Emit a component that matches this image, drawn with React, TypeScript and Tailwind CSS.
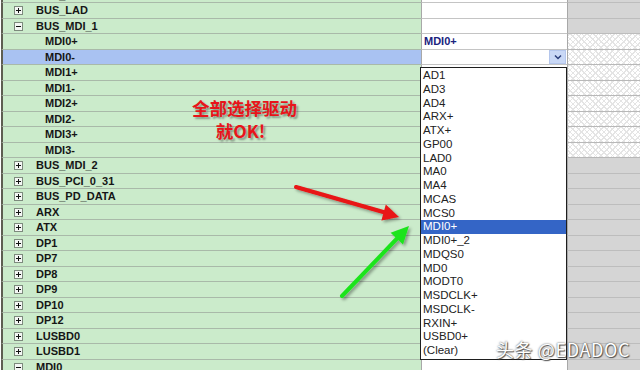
import React from "react";

type Row = {
  label: string;
  level: 0 | 1;
  exp?: "plus" | "minus";
  sel?: boolean;
  hatch?: boolean;
  value?: string;
  combo?: boolean;
};

const rows: Row[] = [
  { label: "BUS_IO", level: 0, exp: "plus" },
  { label: "BUS_LAD", level: 0, exp: "plus" },
  { label: "BUS_MDI_1", level: 0, exp: "minus" },
  { label: "MDI0+", level: 1, hatch: true, value: "MDI0+" },
  { label: "MDI0-", level: 1, hatch: true, sel: true, combo: true },
  { label: "MDI1+", level: 1, hatch: true },
  { label: "MDI1-", level: 1, hatch: true },
  { label: "MDI2+", level: 1, hatch: true },
  { label: "MDI2-", level: 1, hatch: true },
  { label: "MDI3+", level: 1, hatch: true },
  { label: "MDI3-", level: 1, hatch: true },
  { label: "BUS_MDI_2", level: 0, exp: "plus" },
  { label: "BUS_PCI_0_31", level: 0, exp: "plus" },
  { label: "BUS_PD_DATA", level: 0, exp: "plus" },
  { label: "ARX", level: 0, exp: "plus" },
  { label: "ATX", level: 0, exp: "plus" },
  { label: "DP1", level: 0, exp: "plus" },
  { label: "DP7", level: 0, exp: "plus" },
  { label: "DP8", level: 0, exp: "plus" },
  { label: "DP9", level: 0, exp: "plus" },
  { label: "DP10", level: 0, exp: "plus" },
  { label: "DP12", level: 0, exp: "plus" },
  { label: "LUSBD0", level: 0, exp: "plus" },
  { label: "LUSBD1", level: 0, exp: "plus" },
  { label: "MDI0", level: 0, exp: "minus" },
];

const items = [
  "AD1", "AD3", "AD4", "ARX+", "ATX+", "GP00", "LAD0", "MA0", "MA4", "MCAS", "MCS0",
  "MDI0+", "MDI0+_2", "MDQS0", "MD0", "MODT0", "MSDCLK+", "MSDCLK-", "RXIN+", "USBD0+", "(Clear)",
];

function Expander({ kind }: { kind: "plus" | "minus" }) {
  return (
    <svg width="9" height="9" viewBox="0 0 9 9" className="shrink-0">
      <rect x="0.5" y="0.5" width="8" height="8" fill="#f4f7f4" stroke="#7d8a7d" />
      <line x1="2" y1="4.5" x2="7" y2="4.5" stroke="#111" />
      {kind === "plus" && <line x1="4.5" y1="2" x2="4.5" y2="7" stroke="#111" />}
    </svg>
  );
}

export default function App() {
  return (
    <div
      className="relative w-[640px] h-[370px] overflow-hidden bg-white"
      style={{ fontFamily: '"Liberation Sans", Arial, sans-serif' }}
    >
      <div className="-mt-[12.2px] flex flex-col">
        {rows.map((r, i) => (
          <div key={i} className="flex h-[15.5px]">
            <div
              className={`w-[420px] shrink-0 flex items-center border-l-2 border-l-[#5e5e52] border-b border-b-[#a9b9a9] ml-[1px] ${
                r.sel ? "bg-[#a9c2f2]" : "bg-[#cbebcb]"
              }`}
            >
              {r.level === 0 ? (
                <div className="flex items-center pl-[11px] gap-[13px]">
                  {r.exp && <Expander kind={r.exp} />}
                  <span className="text-[11px] font-bold text-[#161616] leading-none">{r.label}</span>
                </div>
              ) : (
                <span className="pl-[42px] text-[11px] font-bold text-[#161616] leading-none">{r.label}</span>
              )}
            </div>
            <div className="w-[146px] shrink-0 bg-white border-l border-l-[#a8a8a8] border-b border-b-[#c4c4c4] flex items-center">
              {r.value && (
                <span className="pl-[2px] text-[11px] font-bold text-[#1a237e] leading-none">{r.value}</span>
              )}
              {r.combo && (
                <div className="w-full h-full flex items-center justify-end pr-[1px] bg-white">
                  <div className="w-[17px] h-[14px] bg-[#c9d8f6] border border-[#b4c6ec] flex items-center justify-center">
                    <svg width="8" height="6" viewBox="0 0 8 6">
                      <path d="M1 1.5 L4 4.5 L7 1.5" fill="none" stroke="#2a3d7a" strokeWidth="1.5" />
                    </svg>
                  </div>
                </div>
              )}
            </div>
            <div
              className={`flex-1 border-l border-l-[#a8a8a8] border-b ${
                r.hatch
                  ? "bg-white border-b-[#b8b8b8] bg-[image:repeating-linear-gradient(45deg,#e4e4e4_0px,#e4e4e4_1px,transparent_1px,transparent_4px),repeating-linear-gradient(-45deg,#e4e4e4_0px,#e4e4e4_1px,transparent_1px,transparent_4px)]"
                  : "bg-[#d5d5d5] border-b-[#bdbdbd]"
              }`}
            />
          </div>
        ))}
      </div>

      {/* dropdown list */}
      <div className="absolute left-[420px] top-[67px] w-[147px] border border-[#1e1e1e] bg-white flex flex-col py-[1px]">
        {items.map((it) => (
          <div
            key={it}
            className={`h-[13.75px] flex items-center pl-[2px] text-[11.5px] leading-none ${
              it === "MDI0+" ? "bg-[#3465c6] text-white" : "text-[#222]"
            }`}
          >
            {it}
          </div>
        ))}
      </div>

      {/* annotation text */}
      <div
        className="absolute left-[192px] top-[97px] flex flex-col items-center gap-[1px] text-[#e8141a] font-bold text-[17.5px] leading-[22px] [text-shadow:2px_2px_2px_rgba(0,0,0,0.35)]"
        style={{ fontFamily: '"Noto Sans CJK SC", "Liberation Sans", sans-serif' }}
      >
        <span>全部选择驱动</span>
        <span className="-ml-[8px]">就OK!</span>
      </div>

      {/* arrows */}
      <svg className="absolute left-0 top-0 pointer-events-none" width="640" height="370" viewBox="0 0 640 370">
        <defs>
          <filter id="sh" x="-20%" y="-20%" width="140%" height="140%">
            <feDropShadow dx="2" dy="2" stdDeviation="1.5" floodColor="#000" floodOpacity="0.35" />
          </filter>
        </defs>
        <g filter="url(#sh)">
          <line x1="296" y1="187" x2="385" y2="212.5" stroke="#e81414" strokeWidth="4" strokeLinecap="round" />
          <polygon points="399,217 381.4,220.4 385.8,204.6" fill="#e81414" />
        </g>
        <g filter="url(#sh)">
          <line x1="342" y1="296" x2="398" y2="237.5" stroke="#1ee41e" strokeWidth="4" strokeLinecap="round" />
          <polygon points="409,226 403,244.5 390.6,232.8" fill="#1ee41e" />
        </g>
      </svg>

      {/* watermark */}
      <div
        className="absolute left-[496px] top-[338px] text-white text-[18px] tracking-[0.6px] leading-[22px] [text-shadow:0_0_2px_#444,1px_1px_1px_#555]"
        style={{ fontFamily: '"Noto Sans CJK SC", "Liberation Sans", sans-serif' }}
      >
        头条 @EDADOC
      </div>
    </div>
  );
}
